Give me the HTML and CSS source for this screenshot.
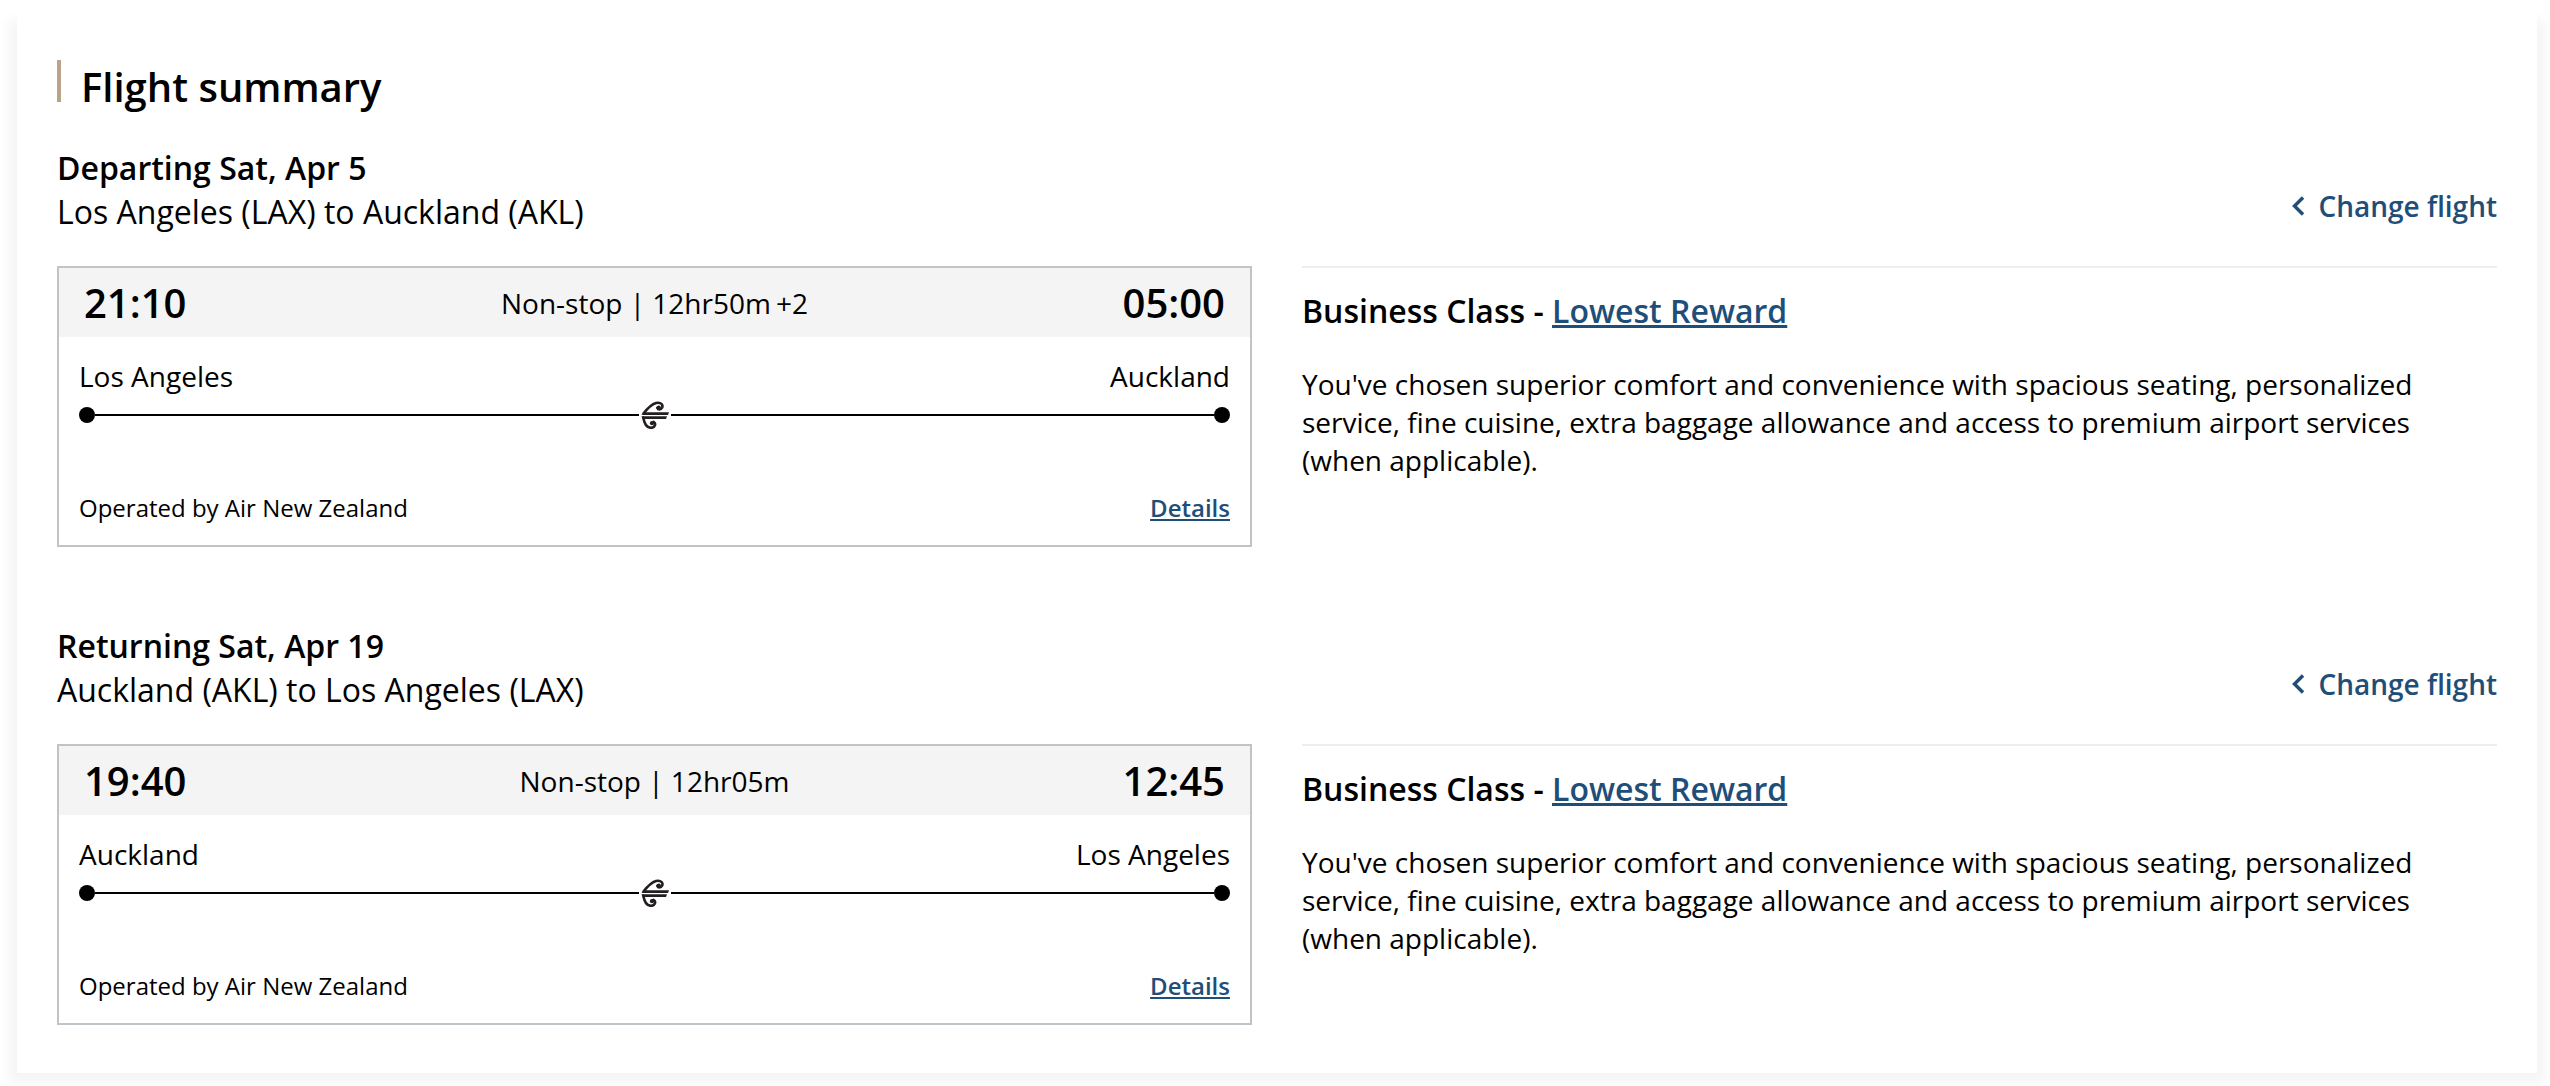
FILE: index.html
```html
<!DOCTYPE html>
<html lang="en">
<head>
<meta charset="utf-8">
<title>Flight summary</title>
<meta name="viewport" content="width=device-width, initial-scale=1">
<link rel="stylesheet" href="styles.css">
</head>
<body>
<svg class="sprite" aria-hidden="true">
  <symbol id="koru" viewBox="0 0 28 28">
    <path d="M2.500 12.500C6 8 10 3.500 15 2C20 0.800 22.500 4 21 6.800C20 9 17 9 16.300 6.800" fill="none" stroke="currentColor" stroke-width="2.600" stroke-linecap="round"/>
    <circle cx="17.800" cy="6.700" r="2.100" fill="currentColor"/>
    <path d="M3 11.300H28L27 14H0.500Z" fill="currentColor"/>
    <path d="M0.500 15.300H26L25 18H1.500Z" fill="currentColor"/>
    <path d="M2.300 16.500C3 21 5 26.500 9.800 26.800C14 27 15.500 22.500 12.500 20.800" fill="none" stroke="currentColor" stroke-width="2.600" stroke-linecap="round"/>
    <circle cx="11" cy="22.200" r="2.100" fill="currentColor"/>
  </symbol>
  <symbol id="chevron" viewBox="0 0 12 20">
    <path d="M11 1.500L2.500 10L11 18.500" fill="none" stroke="currentColor" stroke-width="3.400"/>
  </symbol>
</svg>
<main class="panel">
  <h1 class="title">Flight summary</h1>

  <section class="flight">
    <header class="flight-head">
      <div>
        <h2 class="date">Departing Sat, Apr 5</h2>
        <p class="route">Los Angeles (LAX) to Auckland (AKL)</p>
      </div>
      <a class="change" href="#"><svg class="chevron" aria-hidden="true"><use href="#chevron"/></svg>Change flight</a>
    </header>
    <div class="columns">
      <article class="card">
        <div class="times">
          <span class="time">21:10</span>
          <span class="duration">Non-stop | 12hr50m<span class="days">+2</span></span>
          <span class="time">05:00</span>
        </div>
        <div class="leg">
          <div class="ends"><span>Los Angeles</span><span>Auckland</span></div>
          <div class="track"><span class="dot"></span><span class="line"></span><svg class="koru" aria-hidden="true"><use href="#koru"/></svg><span class="line"></span><span class="dot"></span></div>
          <div class="operator"><span>Operated by Air New Zealand</span><a class="details" href="#">Details</a></div>
        </div>
      </article>
      <div class="fare">
        <h3 class="fare-name">Business Class - <a href="#">Lowest Reward</a></h3>
        <p class="fare-text">You've chosen superior comfort and convenience with spacious seating, personalized service, fine cuisine, extra baggage allowance and access to premium airport services (when applicable).</p>
      </div>
    </div>
  </section>

  <section class="flight">
    <header class="flight-head">
      <div>
        <h2 class="date">Returning Sat, Apr 19</h2>
        <p class="route">Auckland (AKL) to Los Angeles (LAX)</p>
      </div>
      <a class="change" href="#"><svg class="chevron" aria-hidden="true"><use href="#chevron"/></svg>Change flight</a>
    </header>
    <div class="columns">
      <article class="card">
        <div class="times">
          <span class="time">19:40</span>
          <span class="duration">Non-stop | 12hr05m</span>
          <span class="time">12:45</span>
        </div>
        <div class="leg">
          <div class="ends"><span>Auckland</span><span>Los Angeles</span></div>
          <div class="track"><span class="dot"></span><span class="line"></span><svg class="koru" aria-hidden="true"><use href="#koru"/></svg><span class="line"></span><span class="dot"></span></div>
          <div class="operator"><span>Operated by Air New Zealand</span><a class="details" href="#">Details</a></div>
        </div>
      </article>
      <div class="fare">
        <h3 class="fare-name">Business Class - <a href="#">Lowest Reward</a></h3>
        <p class="fare-text">You've chosen superior comfort and convenience with spacious seating, personalized service, fine cuisine, extra baggage allowance and access to premium airport services (when applicable).</p>
      </div>
    </div>
  </section>
</main>
</body>
</html>
```
FILE: styles.css
```css
* { box-sizing: border-box; }
body {
  margin: 0;
  padding: 26px 13px 14px 17px;
  background: #fff;
  color: #000;
  font-family: "Open Sans", "Noto Sans", sans-serif;
  font-size: 28px;
  line-height: 38px;
  overflow-x: hidden;
}
h1, h2, h3, p { margin: 0; }
a { color: #1f4e79; font-weight: 600; }
.sprite { position: absolute; width: 0; height: 0; }
.panel {
  padding: 34px 40px 48px;
  background: #fff;
  /* the white layer hides the shadow along the top edge */
  box-shadow: 0 -20px 0 #fff, 0 2px 10px 8px rgba(0, 0, 0, .045);
}
.title {
  padding-left: 24px;
  background: linear-gradient(#b9a488, #b9a488) 0 0 / 4px 42px no-repeat;
  font-size: 40px;
  line-height: 54px;
  font-weight: 600;
}
.flight { padding-top: 32px; }
.flight + .flight { padding-top: 77px; }
.flight-head {
  display: flex;
  justify-content: space-between;
  align-items: center;
  margin-bottom: 32px;
}
.date, .route { font-size: 32px; line-height: 44px; }
.date { font-weight: 600; }
.change {
  display: flex;
  align-items: center;
  gap: 14px;
  padding-top: 31px;
  text-decoration: none;
}
.chevron { width: 12px; height: 20px; }
.columns {
  display: grid;
  grid-template-columns: 1fr 1fr;
  gap: 50px;
}
.card { border: 2px solid #bfc4c9; }
.times {
  display: grid;
  grid-template-columns: 1fr auto 1fr;
  align-items: center;
  padding: 0 25px;
  background: #f4f4f4;
}
.time { font-size: 40px; line-height: 69px; font-weight: 600; }
.time:last-child { text-align: right; }
.days { margin-left: 5px; }
.leg { padding: 20px; }
.ends, .operator { display: flex; justify-content: space-between; }
.track { display: flex; align-items: center; height: 40px; }
.dot { width: 16px; height: 16px; border-radius: 50%; background: #000; }
.line { flex: 1; height: 2px; background: #000; }
.koru { width: 28px; height: 28px; margin: 0 2px; color: #231f20; }
.operator { padding-top: 56px; font-size: 24px; line-height: 34px; }
.fare { padding-top: 24px; border-top: 2px solid #eee; }
.fare-name { margin-bottom: 35px; font-size: 32px; line-height: 38px; font-weight: 600; }
.fare-text { max-width: 1140px; }
```
